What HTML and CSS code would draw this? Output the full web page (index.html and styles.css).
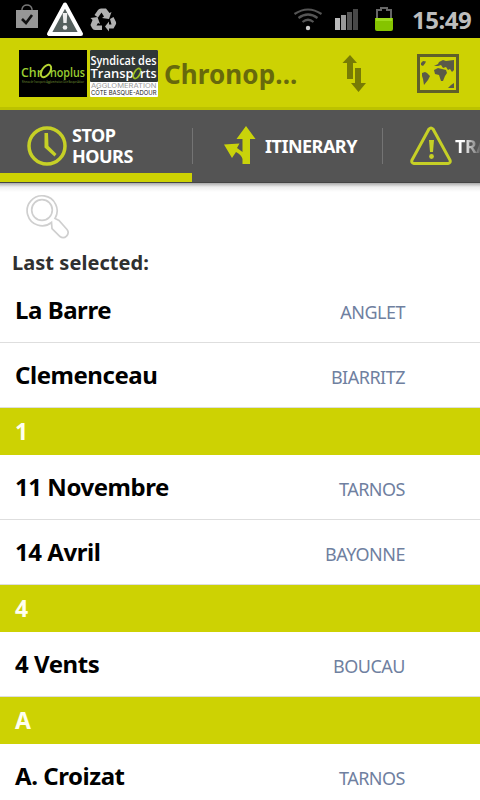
FILE: index.html
```html
<!doctype html>
<html lang="en">
  <head>
    <meta charset="utf-8">
    <title>Chronoplus</title>
    <link rel="stylesheet" href="styles.css">
  </head>
  <body>
    <div class="statusbar">
      <svg class="notifications" width="120" height="38" viewBox="0 0 120 38">
        <path d="M22 11V9q1-4 5-4t5 4v2" fill="none" stroke="#777" stroke-width="1.4"/>
        <path d="M16 10h22v18H16z" fill="#969696"/>
        <path d="M22 19l4 4 6-8" fill="none" stroke="#111" stroke-width="2.6"/>
        <path d="M65 4.500L49 34h32z" fill="#55605e" stroke="#fff" stroke-width="4" stroke-linejoin="round"/>
        <path d="M62.700 13h4.600l-.7 10h-3.200z" fill="#eee"/>
        <circle cx="65" cy="27.500" r="2.300" fill="#eee"/>
        <g fill="#b0b0b0">
          <path d="M94.500 15l3.500-5q1-1.500 3-1.500h5l3.500 4.500 2-1-2.500 7-7-1 2-1.500-2.500-4-3.500 5z"/>
          <path d="M110 19l3.500-2 2.500 5q.5 2-.5 3l-2 3.500H109v3l-4-5 4-5v3h2.500z"/>
          <path d="M90.500 18l7-1 2.500 7-2-1-1.500 2.500h5.500v4.500h-7q-2 0-3-2l-1.500-3 2-5z"/>
        </g>
      </svg>
      <svg class="signals" width="120" height="38" viewBox="0 0 120 38">
        <g fill="none" stroke="#555" stroke-width="2.200">
          <path d="M4.500 14q13.500-9 27 0"/>
          <path d="M8.500 18q9.500-7 19 0"/>
          <path d="M12.500 22q5.500-4.500 11 0"/>
        </g>
        <circle cx="18" cy="28" r="2.200" fill="#ccc"/>
        <path d="M45 18h5v12h-5z" fill="#bbb"/>
        <path d="M51 15h5v15h-5z" fill="#999"/>
        <path d="M57 12h5v18h-5z" fill="#555"/>
        <path d="M63 9h5v21h-5z" fill="#484848"/>
        <path d="M87 20V10h4V8h6v2h4v10" fill="none" stroke="#666" stroke-width="2"/>
        <path d="M85 18h18v11q0 2-2 2H87q-2 0-2-2z" fill="#85c400"/>
        <path d="M86 18h16v3H86z" fill="#9edb1d"/>
      </svg>
      <span class="clock">15:49</span>
    </div>

    <div class="actionbar">
      <svg class="logo" width="139" height="48" viewBox="0 0 139 48">
        <rect y="1" width="68" height="47" fill="#000"/>
        <text class="logo-text" x="2" y="28" font-size="12" fill="#9bcf32" textLength="21" lengthAdjust="spacingAndGlyphs">Chr</text>
        <ellipse cx="27" cy="22" rx="4" ry="7" transform="rotate(35 27 22)" fill="none" stroke="#b5d433" stroke-width="2"/>
        <text class="logo-text" x="31" y="28" font-size="12" fill="#9bcf32" textLength="35" lengthAdjust="spacingAndGlyphs">noplus</text>
        <text class="logo-text" x="3" y="34" font-size="2.500" fill="#5f7a2a" textLength="62" lengthAdjust="spacingAndGlyphs">Réseau de Transports Agglomération Côte Basque-Adour</text>
        <rect x="71" y="1" width="68" height="47" rx="1" fill="#fff"/>
        <rect x="71" y="1" width="68" height="32" rx="1" fill="#303737"/>
        <text class="logo-text" x="71.500" y="16" font-size="12" fill="#fff" textLength="66" lengthAdjust="spacingAndGlyphs">Syndicat des</text>
        <text class="logo-text" x="71.500" y="29" font-size="12" fill="#fff" textLength="43" lengthAdjust="spacingAndGlyphs">Transp</text>
        <ellipse cx="118" cy="24.500" rx="2.800" ry="5.500" transform="rotate(30 118 24.500)" fill="none" stroke="#9bbf20" stroke-width="1.800"/>
        <text class="logo-text" x="121" y="29" font-size="12" fill="#fff" textLength="16.500" lengthAdjust="spacingAndGlyphs">rts</text>
        <text class="logo-thin" x="72" y="39" font-size="6.500" fill="#999" textLength="65.500" lengthAdjust="spacingAndGlyphs">AGGLOMERATION</text>
        <text class="logo-thin" x="72" y="46" font-size="6.500" fill="#222" textLength="65.500" lengthAdjust="spacingAndGlyphs">CÔTE BASQUE-ADOUR</text>
      </svg>
      <h1 class="title">Chronop...</h1>
      <svg class="action" width="24" height="40" viewBox="0 0 24 40">
        <path d="M8 2l7 8h-4v16H5V10H.5zM13 15v15H9l7.500 9 7.500-9h-5V15z" fill="#777b05"/>
      </svg>
      <svg class="action map" width="42" height="39" viewBox="0 0 42 39">
        <rect x="1.500" y="1.500" width="39" height="36" fill="none" stroke="#60602a" stroke-width="3"/>
        <g fill="#5a5a48">
          <path d="M4 9l2-2 3 .5-1 2-2 2.500-2-1zM5 19l3-1 2 1 3 3-2 4-4 5-1-6-1-3z"/>
          <path d="M19 11l2-1 1-2 4-2 3 1 8-1v10l-2 2-2-3-2 1-2-3-3 1-2-3-3 1-4 0zM17 16l4-2 4 1 4 1 1 3-2 3-2 5-2 0-2-6-4-1z"/>
          <path d="M31 34l3-3 3-2v5z"/>
        </g>
      </svg>
    </div>

    <div class="tabs">
      <div class="tab selected">
        <svg class="tab-icon" width="40" height="40" viewBox="0 0 40 40">
          <circle cx="20" cy="20" r="18" fill="none" stroke="#c6d026" stroke-width="3.500"/>
          <path d="M17.500 7h3.500l.5 13 8 8-2 2.500-10-9z" fill="#c6d026"/>
        </svg>
        <span class="tab-label">STOP<br>HOURS</span>
      </div>
      <div class="tab itinerary">
        <svg class="tab-icon" width="34" height="40" viewBox="0 0 34 40">
          <path d="M22 0l9.500 13H26v25h-7.500v-5q-1-4-6.500-7l-4 6L0 18.500l15.500-1L13 22l5.500 4V13h-6z" fill="#c9d30a"/>
        </svg>
        <span class="tab-label">ITINERARY</span>
      </div>
      <div class="tab traffic">
        <svg class="tab-icon" width="44" height="40" viewBox="0 0 44 40">
          <path d="M20 3q2-2 4 0l17 31q1 3-2 3.500H5q-3-.5-2-3.500z" fill="none" stroke="#c6d026" stroke-width="3"/>
          <path d="M20 14h5l-1 12h-3z" fill="#c6d026"/>
          <circle cx="22.500" cy="30.500" r="2.400" fill="#c6d026"/>
        </svg>
        <span class="tab-label fading">TRA</span>
      </div>
    </div>

    <div class="content">
      <svg class="search" width="46" height="46" viewBox="0 0 46 46">
        <g fill="none" stroke="#cfcfcf" stroke-width="1.700">
          <path d="M26.500 28.500a15 15 0 1 1 3.500-4l4 2 8 9a5 5 0 0 1-7 7l-8-8z" fill="#fff"/>
          <circle cx="17" cy="16" r="10.300"/>
        </g>
      </svg>
      <h2 class="last">Last selected:</h2>
      <ul class="stops">
        <li class="stop"><span class="name">La Barre</span><span class="town">ANGLET</span></li>
        <li class="stop"><span class="name">Clemenceau</span><span class="town">BIARRITZ</span></li>
        <li class="letter">1</li>
        <li class="stop"><span class="name">11 Novembre</span><span class="town">TARNOS</span></li>
        <li class="stop"><span class="name">14 Avril</span><span class="town">BAYONNE</span></li>
        <li class="letter">4</li>
        <li class="stop"><span class="name">4 Vents</span><span class="town">BOUCAU</span></li>
        <li class="letter">A</li>
        <li class="stop"><span class="name">A. Croizat</span><span class="town">TARNOS</span></li>
      </ul>
    </div>
  </body>
</html>
```
FILE: styles.css
```css
* {
  box-sizing: border-box;
}
body {
  margin: 0;
  height: 800px;
  overflow: hidden;
  display: flex;
  flex-direction: column;
  background: #fff;
  font-family: 'Noto Sans', 'Open Sans', sans-serif;
}
svg {
  flex: none;
  display: block;
}
.statusbar {
  flex: none;
  height: 38px;
  display: flex;
  align-items: center;
  background: #000;
}
.signals {
  margin-left: 170px;
}
.clock {
  margin-left: 2px;
  color: #bdbdbd;
  font-size: 24px;
  font-weight: 700;
  letter-spacing: -0.5px;
}
.actionbar {
  flex: none;
  height: 72px;
  padding: 0 21px 0 19px;
  display: flex;
  align-items: center;
  background: #cdd203;
  border-bottom: 3px solid #bcc200;
}
.logo-text {
  font-family: 'Open Sans', sans-serif;
  font-weight: 600;
}
.logo-thin {
  font-family: Inter, sans-serif;
}
.title {
  margin: 0 0 0 6px;
  padding-top: 2px;
  width: 178px;
  color: #67690c;
  font-size: 26px;
  font-weight: 700;
  letter-spacing: 0.1px;
}
.map {
  margin: 1px 0 0 auto;
}
.tabs {
  flex: none;
  height: 73px;
  display: flex;
  overflow: hidden;
  background: #545454;
  border-bottom: 1px solid #444;
}
.tab {
  flex: none;
  height: 72px;
  display: flex;
  align-items: center;
  color: #fff;
  font-size: 18px;
  font-weight: 700;
  letter-spacing: -0.5px;
  line-height: 21px;
}
.selected {
  width: 192px;
  padding: 9px 0 0 27px;
  border-bottom: 9px solid #cdd203;
}
.selected .tab-label {
  margin-left: 5px;
}
.itinerary {
  width: 191px;
  padding-left: 32px;
  background-image: linear-gradient(#747474, #747474), linear-gradient(#747474, #747474);
  background-position: left 18px, right 18px;
  background-size: 1px 36px;
  background-repeat: no-repeat;
}
.itinerary .tab-label {
  margin-left: 7px;
}
.traffic {
  padding-left: 26px;
}
.traffic .tab-label {
  margin-left: 2px;
}
.fading {
  width: 25px;
  overflow: hidden;
  color: transparent;
  background: linear-gradient(90deg, #fff 8px, #545454 27px);
  -webkit-background-clip: text;
  background-clip: text;
}
.content {
  flex: 1;
  min-height: 0;
  background: linear-gradient(#aaa, #eee 4px, #fff 9px);
}
.search {
  margin: 11px 0 0 25px;
}
.last {
  margin: 7px 0 0 12px;
  height: 31px;
  color: #303030;
  font-size: 20px;
  font-weight: 700;
  letter-spacing: 0.05px;
  line-height: 31px;
}
.stops {
  margin: 0;
  padding: 0;
  list-style: none;
}
.stop {
  height: 65px;
  padding: 0 75px 0 15px;
  display: flex;
  justify-content: space-between;
  align-items: center;
  border-bottom: 1px solid #dedede;
}
.name {
  padding-bottom: 1px;
  color: #000;
  font-size: 24px;
  font-weight: 700;
  letter-spacing: -0.45px;
}
.town {
  padding-top: 4px;
  color: #6f80a0;
  font-size: 18px;
  letter-spacing: -0.5px;
}
.letter {
  height: 47px;
  padding-left: 15px;
  color: #fffff0;
  background: #cdd203;
  font-size: 23px;
  font-weight: 700;
  line-height: 47px;
}
```
